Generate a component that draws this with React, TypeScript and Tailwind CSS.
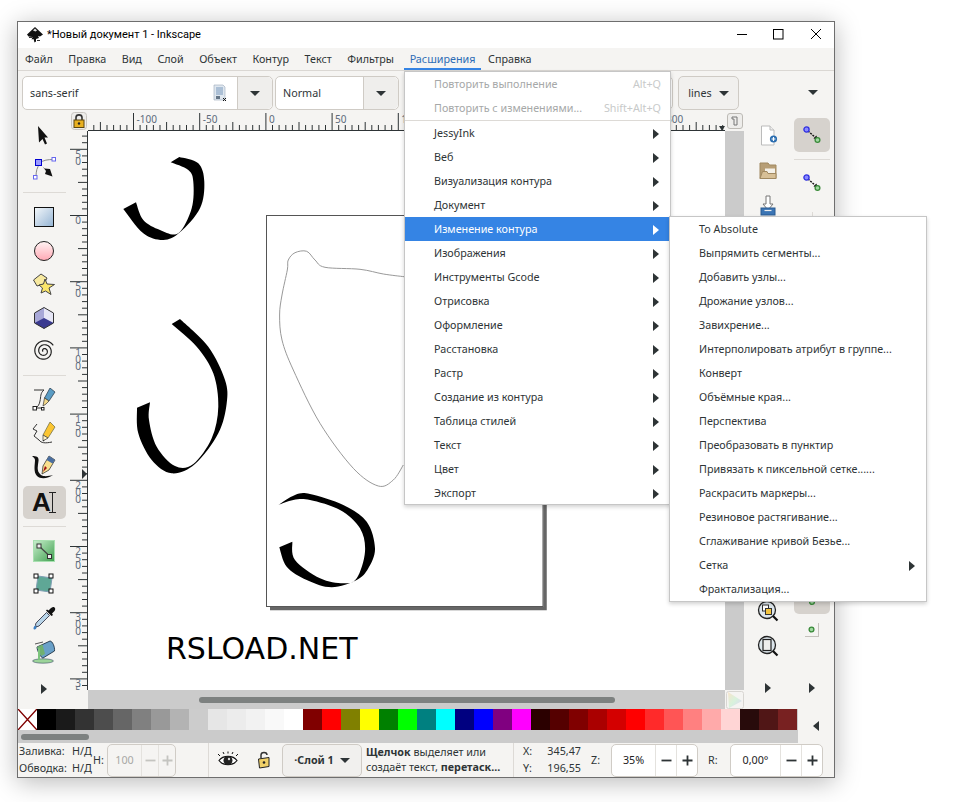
const menuBar = ['Файл', 'Правка', 'Вид', 'Слой', 'Объект', 'Контур', 'Текст', 'Фильтры']

const extMenu = [
  'JessyInk',
  'Веб',
  'Визуализация контура',
  'Документ',
  'Изменение контура',
  'Изображения',
  'Инструменты Gcode',
  'Отрисовка',
  'Оформление',
  'Расстановка',
  'Растр',
  'Создание из контура',
  'Таблица стилей',
  'Текст',
  'Цвет',
  'Экспорт',
]

const pathMenu = [
  'To Absolute',
  'Выпрямить сегменты...',
  'Добавить узлы...',
  'Дрожание узлов...',
  'Завихрение...',
  'Интерполировать атрибут в группе...',
  'Конверт',
  'Объёмные края...',
  'Перспектива',
  'Преобразовать в пунктир',
  'Привязать к пиксельной сетке......',
  'Раскрасить маркеры...',
  'Резиновое растягивание...',
  'Сглаживание кривой Безье...',
  'Сетка',
  'Фрактализация...',
]

const palette = [
  '#000000', '#1a1a1a', '#333333', '#4d4d4d', '#666666', '#808080', '#999999', '#b3b3b3', '#cccccc', '#e6e6e6',
  '#ececec', '#f2f2f2', '#f9f9f9', '#ffffff', '#800000', '#ff0000', '#808000', '#ffff00', '#008000', '#00ff00',
  '#008080', '#00ffff', '#000080', '#0000ff', '#800080', '#ff00ff', '#2b0000', '#550000', '#800000', '#aa0000',
  '#d40000', '#ff0000', '#ff2a2a', '#ff5555', '#ff8080', '#ffaaaa', '#ffd5d5', '#280b0b', '#501616', '#782121',
]

type Pt = [number, number]

// smooth curve through hand-picked points (catmull-rom as cubic beziers)
function spline(p: Pt[]) {
  let d = ''
  for (let i = 0; i < p.length - 1; i++) {
    const a = p[Math.max(i - 1, 0)]
    const b = p[i]
    const c = p[i + 1]
    const e = p[Math.min(i + 2, p.length - 1)]
    d += `C${b[0] + (c[0] - a[0]) / 6} ${b[1] + (c[1] - a[1]) / 6} ${c[0] - (e[0] - b[0]) / 6} ${c[1] - (e[1] - b[1]) / 6} ${c[0]} ${c[1]}`
  }
  return d
}

function stroke(outer: Pt[], inner: Pt[]) {
  return `M${outer[0][0]} ${outer[0][1]}${spline(outer)}L${inner[0][0]} ${inner[0][1]}${spline(inner)}Z`
}

const shapeA = stroke(
  [[179.3, 157], [198.3, 163.3], [204.3, 181.7], [200, 208.3], [180, 232.3], [163.3, 240], [143.3, 233.3], [123.3, 209]],
  [[136, 202.3], [143.3, 220], [160, 230], [178.3, 233.3], [191.7, 208.3], [193.3, 181.7], [188.3, 170], [170.7, 162.3]],
)

const shapeB = stroke(
  [[180, 319], [208.3, 346.7], [225, 380], [226.7, 403.3], [218.3, 433.3], [195, 464], [171.7, 473.3], [151.7, 460], [138.3, 433.3], [137, 407.7]],
  [[150, 402.3], [149, 420], [156.7, 446.7], [175, 466], [193.3, 464], [211.7, 438.3], [218.3, 406.7], [213.3, 373.3], [196.7, 346.7], [171.7, 324]],
)

const shapeC = stroke(
  [[278.3, 505], [295, 495], [310, 494], [343.3, 505], [366.7, 521.7], [375, 548.3], [368.3, 568.3], [356.7, 580], [331.7, 587.3], [306.7, 580], [286.7, 566.7], [279.3, 547.3]],
  [[292.3, 541.7], [295, 560], [320, 578.3], [343.3, 583.3], [356.7, 578.3], [365, 551.7], [360, 528.3], [340, 510], [310, 500], [293.3, 500], [278.3, 505]],
)

const outline: Pt[] = [
  [404, 276.7], [383.3, 274], [360, 269.3], [325, 267.3], [315, 260], [306.7, 251.3], [295, 252.7], [288.3, 260], [287.3, 270],
  [282, 295], [279.6, 315], [282, 340], [293.3, 370], [320, 423.3], [353.3, 468.3], [378.3, 486], [393.3, 480], [403.3, 465],
]

const spiral = (() => {
  const pts: string[] = []
  for (let i = 0; i <= 90; i++) {
    const t = (i / 90) * Math.PI * 5
    const r = 1 + (i / 90) * 9.8
    pts.push(`${(12 + r * Math.cos(t + 2.6)).toFixed(2)} ${(12 + r * Math.sin(t + 2.6)).toFixed(2)}`)
  }
  return `M${pts.join('L')}`
})()

function Tri({ dir = 'right', light = false }: { dir?: 'right' | 'left' | 'down'; light?: boolean }) {
  const fill = light ? '#ffffff' : '#2e3436'
  if (dir === 'down') {
    return (
      <svg width="10" height="5" viewBox="0 0 10 5">
        <path d="M0 0H10L5 5Z" fill={fill} />
      </svg>
    )
  }
  return (
    <svg width="6" height="10" viewBox="0 0 6 10">
      <path d={dir === 'right' ? 'M0 0L6 5L0 10Z' : 'M6 0L0 5L6 10Z'} fill={fill} />
    </svg>
  )
}

function Logo() {
  return (
    <svg width="18" height="18" viewBox="0 0 18 18">
      <path d="M9 1L17 8.5L14 10.5L12 10L13 12L10 13L10 15.5L8.5 16.5L7.5 13L5.5 13.5L6.5 11L2.5 10.5L1 8.5Z" fill="#111" />
      <path d="M7 4.5L9 2.5L11 4.5L9.5 5.5Z" fill="#ddd" />
      <path d="M3 11.5H6M11 14.5H14" stroke="#333" strokeWidth="1" />
    </svg>
  )
}

function I({ children }: { children: React.ReactNode }) {
  return (
    <svg width="24" height="24" viewBox="0 0 24 24">
      {children}
    </svg>
  )
}

const tools: (React.ReactNode | null)[] = [
  <I>
    <path d="M6 3L16 14.5L12.5 14.5L15 20.5L13 21.5L10.5 16L7 19.5Z" fill="#111" />
  </I>,
  <I>
    <path d="M4 21C4 15 5 11 8 8M8 7C11 4 16 3.5 22 3.5" fill="none" stroke="#888" />
    <rect x="3.5" y="3.5" width="6" height="6" fill="#9a9aff" stroke="#0000d0" />
    <rect x="20" y="1.5" width="3.5" height="3.5" fill="#fff" stroke="#6666ee" />
    <rect x="1.5" y="19.5" width="3.5" height="3.5" fill="#fff" stroke="#6666ee" />
    <path d="M10.5 10.5L12.5 12.5L18 13L20.5 20.5L13 18L14 15Z" fill="#111" />
  </I>,
  null,
  <I>
    <defs>
      <linearGradient id="rectG" x1="0" y1="0" x2="1" y2="1">
        <stop offset="0" stopColor="#f4f8fb" />
        <stop offset="1" stopColor="#94b4d4" />
      </linearGradient>
    </defs>
    <rect x="2.5" y="2.5" width="19" height="19" fill="url(#rectG)" stroke="#111" />
  </I>,
  <I>
    <defs>
      <linearGradient id="circG" x1="0" y1="0" x2="0" y2="1">
        <stop offset="0" stopColor="#fff4f4" />
        <stop offset="1" stopColor="#ffa8b4" />
      </linearGradient>
    </defs>
    <circle cx="12" cy="12" r="9.5" fill="url(#circG)" stroke="#222" />
  </I>,
  <I>
    <path d="M1.5 8L9 2L15 6L12 12L5 14Z" fill="#f7e9a0" stroke="#444" />
    <path d="M13 7L15 12L22.5 12.5L17 16L19 22.5L13.5 19L9 21L10.5 16L7 13L11.5 12Z" fill="#fbe66a" stroke="#444" />
  </I>,
  <I>
    <path d="M12 1.5L21.5 7V17L12 22.5L2.5 17V7Z" fill="#a8a8d8" />
    <path d="M12 1.5L21.5 7V17L12 12Z" fill="#e6e6f6" />
    <path d="M2.5 17L12 12L21.5 17L12 22.5Z" fill="#3a3a90" />
    <path d="M12 1.5L21.5 7V17L12 22.5L2.5 17V7Z" fill="none" stroke="#333" />
  </I>,
  <I>
    <path d={spiral} fill="none" stroke="#222" strokeWidth="1.2" />
  </I>,
  null,
  <I>
    <path d="M2 2H12C8 5 9 9 8 13C7.5 16 6 19 3.5 20H10" fill="none" stroke="#333" />
    <rect x="1" y="18.5" width="3.5" height="3.5" fill="#fff" stroke="#222" />
    <rect x="9.5" y="19.5" width="2.5" height="2.5" fill="#fff" stroke="#222" />
    <path d="M18 0L23 4L17 13L12.5 10Z" fill="#5a9cc4" stroke="#234" strokeWidth=".7" />
    <path d="M12.5 10L17 13L14 16L11 18Z" fill="#f4d98a" stroke="#333" strokeWidth=".7" />
  </I>,
  <I>
    <path d="M5 2L1 7L5 9L2 14L7 18C9 21 13 21.5 20 20" fill="none" stroke="#333" />
    <path d="M18 0L23 5L16 16L11 13Z" fill="#fbc531" stroke="#664" strokeWidth=".7" />
    <path d="M11 13L16 16L11 19Z" fill="#fff3c8" stroke="#333" strokeWidth=".7" />
    <path d="M11 18.5L13 17.5L11 19.5Z" fill="#111" />
  </I>,
  <I>
    <path d="M0 1C5 1 7 2 6.5 6C6 11 4 16 9 20C12 22 17 21 21 20C17 23 9 25 5 21C1 17 3 9 3 5C3 3 1 2 0 1Z" fill="#111" />
    <path d="M17 1L23 5L17 15L10 19L11 11Z" fill="#f9e08e" stroke="#222" strokeWidth=".7" />
    <path d="M17 1L23 5L20.5 8.5L14.5 5Z" fill="#4a6ea0" />
    <path d="M13 11L15 13L11 17Z" fill="#a01010" />
  </I>,
  'text',
  null,
  <I>
    <defs>
      <linearGradient id="gradG" x1="0" y1="0" x2="1" y2="1">
        <stop offset="0" stopColor="#c8eecc" />
        <stop offset="1" stopColor="#40a050" />
      </linearGradient>
    </defs>
    <rect x="1.5" y="1.5" width="21" height="21" fill="url(#gradG)" stroke="#a8e0b0" />
    <path d="M7 7L17.5 17" stroke="#444" strokeWidth="1.2" />
    <rect x="5" y="5" width="4" height="4" fill="#eee" stroke="#333" />
    <rect x="15.5" y="15.5" width="4" height="4" fill="#eee" stroke="#333" />
  </I>,
  <I>
    <path d="M6 4L20 6L18 20L4 18Z" fill="#5fa796" stroke="#7f9fb4" />
    <rect x="2" y="2" width="4" height="4" fill="#fff" stroke="#111" />
    <rect x="17" y="2" width="4" height="4" fill="#fff" stroke="#111" />
    <rect x="2" y="17" width="4" height="4" fill="#fff" stroke="#111" />
    <rect x="17" y="17" width="4" height="4" fill="#fff" stroke="#111" />
  </I>,
  <I>
    <path d="M21 1C23 1 24 3 22.5 5L20 7.5L21 9L19.5 10L14 4.5L15 3.5L16.5 4.5L19 2Z" fill="#111" />
    <path d="M14.5 6.5L17.5 9.5L7 20L4 21L3.5 18L5 16Z" fill="#b8d4e8" stroke="#223" strokeWidth=".8" />
    <path d="M3 19.5C1.5 21 1 22.5 2 23.5C3.5 24 4.5 22.5 4.5 21Z" fill="#3b7fc4" />
  </I>,
  <I>
    <ellipse cx="11" cy="21" rx="10.5" ry="2.2" fill="#9cd49a" stroke="#235" strokeWidth=".5" />
    <path d="M5 7L18 1C20.5 1 23 7 22.5 11L11 18C9 18 5 11 5 7Z" fill="#6aa0c8" stroke="#123" strokeWidth=".8" />
    <path d="M5 7L10.5 4.5L13 14L9 16Z" fill="#70b070" />
    <path d="M3 4L11 2" stroke="#555" />
    <path d="M7 8V20" stroke="#7cc47c" strokeWidth="2" />
  </I>,
]

function NewDoc() {
  return (
    <I>
      <path d="M5.5 2H14L18 6V21H5.5Z" fill="#fff" stroke="#bbb" />
      <path d="M14 2V6H18" fill="#eee" stroke="#bbb" />
      <circle cx="17.5" cy="15" r="3.6" fill="#2a6db0" />
      <path d="M15.5 15H19.5M17.5 13V17" stroke="#fff" strokeWidth="1.2" />
    </I>
  )
}

function OpenDoc() {
  return (
    <I>
      <path d="M4 4H12L13.5 6H20V19.5H4Z" fill="#b79e76" stroke="#a08860" />
      <path d="M9 9.5H19V14H9Z" fill="#f4f0e8" />
      <path d="M4 19.5L6.5 12.5H11L12 14.5H20V19.5Z" fill="#d7bf96" stroke="#a08860" />
    </I>
  )
}

function ImportDoc() {
  return (
    <I>
      <path d="M10 2H14V10H17L12 16L7 10H10Z" fill="#fff" stroke="#777" />
      <rect x="5" y="14" width="14" height="7" fill="#3b75b5" stroke="#2a5a90" />
      <path d="M8.5 16.5H15.5" stroke="#eee" strokeWidth="1.2" />
    </I>
  )
}

function SnapNodes() {
  return (
    <I>
      <path d="M8 8L16 15" stroke="#111" strokeWidth="1.4" strokeDasharray="2 1" />
      <path d="M17.5 16.5L16.5 12.5L13.5 15.5Z" fill="#111" />
      <circle cx="6.5" cy="6.5" r="2.6" fill="#8a8aff" stroke="#3030e0" strokeWidth="1.3" />
      <circle cx="17.5" cy="17" r="2.4" fill="#a0d8a0" stroke="#3a8a3a" strokeWidth="1.3" />
    </I>
  )
}

function ZoomIcon({ kind }: { kind: 'selection' | 'page' }) {
  return (
    <I>
      <circle cx="11" cy="11" r="8.5" fill="#dde6ec" stroke="#222" strokeWidth="1.3" />
      <path d="M17 17L21.5 21.5" stroke="#111" strokeWidth="2.2" />
      {kind === 'selection' ? (
        <>
          <rect x="6.5" y="6" width="6" height="6" fill="#fff" stroke="#333" />
          <rect x="9.5" y="9.5" width="6" height="6" fill="#f4c542" stroke="#333" />
        </>
      ) : (
        <rect x="7" y="5.5" width="8" height="11" fill="#eee" stroke="#222" strokeWidth="1.2" />
      )}
    </I>
  )
}

function HRuler() {
  const ticks = Array.from({ length: 100 }, (_, i) => i)
  const labels = ['-100', '-50', '0', '50', '100', '150', '200', '250', '300']
  return (
    <svg width="637" height="20" viewBox="0 0 637 20" className="block">
      {ticks.map(i => {
        const x = 45.5 + (i - 6) * 6.62
        const k = (i + 4) % 10
        const top = k === 0 ? 2 : k === 5 ? 11 : 14
        return <path key={i} d={`M${x.toFixed(1)} ${top}V19`} stroke="#2e3436" />
      })}
      {labels.map((t, i) => (
        <text key={t} x={45.5 + i * 66.2 + 3} y="12" fontSize="10" fill="#5d6b7c">
          {t}
        </text>
      ))}
      <path d="M0 19.5H637" stroke="#2e3436" />
      <path d="M631 15L637 15L634 20Z" fill="#2e3436" />
    </svg>
  )
}

function VRuler() {
  const ticks = Array.from({ length: 85 }, (_, i) => i)
  const labels = ['50', '0', '50', '100', '150', '200', '250', '300', '350']
  return (
    <svg width="18" height="559" viewBox="0 0 18 559" className="block shrink-0">
      {ticks.map(i => {
        const y = 84.5 + (i - 12) * 6.62
        const k = (i + 8) % 10
        const left = k === 0 ? 0 : k === 5 ? 8 : 12
        return <path key={i} d={`M${left} ${y.toFixed(1)}H17`} stroke="#2e3436" />
      })}
      {labels.map((t, n) =>
        t.split('').map((c, i) => (
          <text key={`${n}-${i}`} x="8" y={84 + (n - 1) * 66.2 + 9 + i * 7} fontSize="10" textAnchor="middle" fill="#5d6b7c">
            {c}
          </text>
        )),
      )}
      <path d="M17.5 0V559" stroke="#2e3436" />
      <path d="M12 338L17 343L12 348Z" fill="#2e3436" />
    </svg>
  )
}

function Drawing() {
  return (
    <svg viewBox="88 131 637 559" className="absolute inset-0 w-full h-full">
      <path d={shapeA} fill="#000" />
      <path d={shapeB} fill="#000" />
      <path d={shapeC} fill="#000" />
      <rect x="266.5" y="215.5" width="276.5" height="391" fill="none" stroke="#555" />
      <path d="M545 219V608.5H270" fill="none" stroke="#666" strokeWidth="3.5" />
      <path d={`M${outline[0][0]} ${outline[0][1]}${spline(outline)}`} fill="none" stroke="#999" />
    </svg>
  )
}

function Spin({ value, w, btn, dim = false }: { value: string; w: string; btn: string; dim?: boolean }) {
  const sign = dim ? 'text-[#c4c4c0]' : 'text-[#2e3436]'
  return (
    <div className={`flex h-[33px] items-stretch rounded-[5px] border border-[#d0ccc6] shrink-0 ${dim ? 'bg-[#f5f4f2]' : 'bg-white'}`}>
      <div className={`flex items-center justify-center ${w} ${dim ? 'text-[#a8a8a4]' : 'text-[#222]'}`}>{value}</div>
      <div className={`flex items-center justify-center border-l border-[#e4e2de] ${btn} ${sign}`}>
        <svg width="11" height="11" viewBox="0 0 11 11">
          <path d="M0.5 5.5H10.5" stroke="currentColor" strokeWidth="1.8" />
        </svg>
      </div>
      <div className={`flex items-center justify-center border-l border-[#e4e2de] ${btn} ${sign}`}>
        <svg width="11" height="11" viewBox="0 0 11 11">
          <path d="M0.5 5.5H10.5M5.5 0.5V10.5" stroke="currentColor" strokeWidth="1.8" />
        </svg>
      </div>
    </div>
  )
}

export default function App() {
  return (
    <div className="w-[964px] h-[802px] bg-white pt-[21px] pl-[17px] overflow-hidden text-[10.75px] text-[#2e3436] [font-family:'Noto_Sans','Liberation_Sans',sans-serif]">
      <div className="relative flex flex-col w-[818px] h-[757px] border border-[#6e6e6e] bg-[#f5f4f2] shadow-[0_4px_24px_rgba(0,0,0,0.28)]">
        {/* title bar */}
        <div className="flex items-center h-[26px] bg-white shrink-0 text-black">
          <div className="ml-[8px] mr-[3px]">
            <Logo />
          </div>
          <span className="text-[11px] [font-family:'Roboto',sans-serif]">*Новый документ 1 - Inkscape</span>
          <div className="ml-auto flex items-center">
            <svg width="140" height="26" viewBox="0 0 140 26">
              <path d="M43 12.5H53" stroke="#000" />
              <rect x="79.5" y="7.5" width="9.5" height="9.5" fill="none" stroke="#000" />
              <path d="M117 7L127 17M127 7L117 17" stroke="#000" />
            </svg>
          </div>
        </div>

        {/* menu bar */}
        <div className="flex items-stretch h-[23px] border-b border-[#dad7d3] shrink-0">
          <div className="flex items-center w-[379px] ml-[7px] gap-[15.5px] pt-[1px]">
            {menuBar.map(m => (
              <span key={m}>{m}</span>
            ))}
          </div>
          <div className="flex items-center w-[77px] justify-center border-b-[2px] border-[#3584e4] pt-[3px] text-[#2d6cb5]">
            Расширения
          </div>
          <span className="ml-[7px] flex items-center pt-[1px]">Справка</span>
        </div>

        {/* tool controls */}
        <div className="flex items-start h-[40px] pt-[5px] pl-[4px] shrink-0">
          <div className="flex w-[251px] h-[34px] rounded-[5px] border border-[#cfcbc5] bg-white">
            <div className="flex flex-1 items-center pl-[7px] pr-[10px]">
              <span>sans-serif</span>
              <svg className="ml-auto" width="14" height="18" viewBox="0 0 14 18">
                <path d="M1 1H10L12 3V16H1Z" fill="#dfe7ef" stroke="#9aa8b8" strokeWidth=".6" />
                <path d="M3 4H10M3 6H10M3 8H10M3 10H10" stroke="#7898bc" />
                <rect x="3" y="12" width="4" height="3" fill="#678" />
                <path d="M10 14L13 17M13 14L10 17" stroke="#111" />
              </svg>
            </div>
            <div className="flex w-[35px] items-center justify-center rounded-r-[5px] border-l border-[#cfcbc5] bg-[#efeeec]">
              <Tri dir="down" />
            </div>
          </div>
          <div className="ml-[2px] flex w-[124px] h-[34px] rounded-[5px] border border-[#cfcbc5] bg-white">
            <div className="flex flex-1 items-center pl-[7px]">Normal</div>
            <div className="flex w-[35px] items-center justify-center rounded-r-[5px] border-l border-[#cfcbc5] bg-[#efeeec]">
              <Tri dir="down" />
            </div>
          </div>
          <div className="ml-[8px] w-[266px] h-[34px] rounded-[5px] border border-[#cfcbc5] bg-white" />
          <div className="ml-[5px] flex w-[61px] h-[34px] items-center justify-center gap-[7px] rounded-[5px] border border-[#cfcbc5] bg-[#f1f0ee]">
            lines
            <Tri dir="down" />
          </div>
          <div className="ml-[69px] mt-[14px]">
            <Tri dir="down" />
          </div>
        </div>

        {/* main */}
        <div className="flex h-[598px] shrink-0">
          <div className="flex flex-col items-center w-[52px] shrink-0 pt-[7px]">
            {tools.map((t, i) =>
              t === null ? (
                <div key={i} className="w-[43px] h-px bg-[#dddad6] my-[7px] shrink-0" />
              ) : t === 'text' ? (
                <div key={i} className="flex items-center justify-center w-[43px] h-[33px] mt-[2px] rounded-[5px] bg-[#d6d2cd] shrink-0 relative">
                  <span className="mr-[5px] text-[26px] leading-none font-bold text-[#111] [font-family:'Liberation_Sans',sans-serif]">A</span>
                  <svg className="absolute right-[10px] top-[6px]" width="7" height="21" viewBox="0 0 7 21">
                    <path d="M0 .5H7M3.5 0V21M0 20.5H7" stroke="#222" />
                  </svg>
                </div>
              ) : (
                <div key={i} className="flex items-center justify-center h-[33.6px] shrink-0">
                  {t}
                </div>
              ),
            )}
            <div className="mt-[16px]">
              <Tri />
            </div>
          </div>

          <div className="flex flex-col w-[674px] shrink-0">
            <div className="flex h-[20px] shrink-0">
              <div className="w-[18px] flex items-center justify-center">
                <svg width="16" height="18" viewBox="0 0 16 18">
                  <rect x=".5" y=".5" width="15" height="17" rx="3" fill="#eeedeb" stroke="#c8c5c0" />
                  <path d="M5 8V5.5C5 2 11 2 11 5.5V8" fill="none" stroke="#333" strokeWidth="1.6" />
                  <rect x="3" y="8" width="10" height="7.5" fill="#e8b020" stroke="#5a4510" />
                  <circle cx="8" cy="11.5" r="1.2" fill="#222" />
                </svg>
              </div>
              <div className="w-[637px] overflow-hidden">
                <HRuler />
              </div>
              <div className="w-[19px] flex items-center justify-center">
                <svg width="16" height="16" viewBox="0 0 16 16">
                  <rect x=".5" y=".5" width="15" height="15" rx="2.5" fill="#eeedeb" stroke="#bdbab5" />
                  <path d="M5 4H10V12H7V6H5Z" fill="none" stroke="#777" />
                </svg>
              </div>
            </div>
            <div className="flex h-[559px] shrink-0">
              <VRuler />
              <div className="relative w-[637px] bg-white overflow-hidden">
                <Drawing />
                <div className="absolute left-[78px] top-[500px] text-[30px] leading-[36px] text-black [font-family:'DejaVu_Sans',sans-serif]">
                  RSLOAD.NET
                </div>
              </div>
              <div className="w-[19px] bg-[#cbcbcb]" />
            </div>
            <div className="flex h-[19px] shrink-0">
              <div className="w-[18px]" />
              <div className="w-[637px] flex items-center pl-[111px] bg-[#cbcbcb]">
                <div className="w-[416px] h-[6px] rounded-full bg-[#7d8180]" />
              </div>
              <div className="w-[19px] flex items-center justify-center">
                <svg width="18" height="18" viewBox="0 0 18 18">
                  <defs>
                    <linearGradient id="cornerG" x1="0" y1="0" x2="1" y2="1">
                      <stop offset="0" stopColor="#f8e4cc" />
                      <stop offset=".5" stopColor="#d8f2dc" />
                      <stop offset="1" stopColor="#dcd4f6" />
                    </linearGradient>
                  </defs>
                  <rect x=".5" y=".5" width="17" height="17" rx="2" fill="#f5f4f2" stroke="#d8d6d2" />
                  <path d="M2 1L16 10L3 17Z" fill="url(#cornerG)" />
                </svg>
              </div>
            </div>
          </div>

          <div className="flex flex-col items-center w-[46px] shrink-0 pt-[7px] pl-[2px]">
            <div className="h-[35px] flex items-center"><NewDoc /></div>
            <div className="h-[35px] flex items-center"><OpenDoc /></div>
            <div className="h-[35px] flex items-center"><ImportDoc /></div>
            <div className="mt-[370px] h-[35px] flex items-center"><ZoomIcon kind="selection" /></div>
            <div className="h-[35px] flex items-center"><ZoomIcon kind="page" /></div>
            <div className="mt-[20px]"><Tri /></div>
          </div>

          <div className="flex flex-col items-center w-[44px] shrink-0 pt-[7px]">
            <div className="flex items-center justify-center w-[36px] h-[34px] rounded-[5px] bg-[#d6d2cd] shrink-0">
              <SnapNodes />
            </div>
            <div className="w-[36px] h-px bg-[#dddad6] mt-[7px] shrink-0" />
            <div className="mt-[11px] h-[24px] shrink-0"><SnapNodes /></div>
            <div className="mt-[17px] h-[8px] w-px bg-[#dddad6] shrink-0" />
            <div className="mt-[370px] flex items-center justify-center w-[36px] h-[24px] rounded-[5px] bg-[#d6d2cd] shrink-0">
              <svg width="8" height="8" viewBox="0 0 8 8">
                <circle cx="4" cy="4" r="2.4" fill="#a0d8a0" stroke="#3a8a3a" strokeWidth="1.3" />
              </svg>
            </div>
            <div className="mt-[9px] flex items-center justify-center w-[14px] h-[14px] border-r border-b border-[#c4c1bc] shrink-0">
              <svg width="7" height="7" viewBox="0 0 7 7">
                <circle cx="3.5" cy="3.5" r="2.4" fill="#a0d8a0" stroke="#3a8a3a" strokeWidth="1.3" />
              </svg>
            </div>
            <div className="mt-[46px]"><Tri /></div>
          </div>
        </div>

        {/* palette */}
        <div className="flex h-[34px] shrink-0">
          <div className="w-[780px] shrink-0 bg-[#cbcbcb]">
            <div className="flex h-[21px]">
              <svg width="19" height="21" viewBox="0 0 19 21" className="shrink-0 bg-white">
                <path d="M0 0L19 21M19 0L0 21" stroke="#800000" strokeWidth="1.4" />
              </svg>
              {palette.map((c, i) => (
                <div key={i} className="w-[19px] h-[21px] shrink-0" style={{ backgroundColor: c }} />
              ))}
            </div>
            <div className="flex items-center h-[13px] pl-[3px]">
              <div className="w-[68px] h-[6px] rounded-full bg-[#7d8180]" />
            </div>
          </div>
          <div className="flex flex-1 items-center justify-center pr-[1px]">
            <Tri dir="left" />
          </div>
        </div>

        {/* status bar */}
        <div className="flex items-center flex-1 min-h-0">
          <div className="w-[75px] pl-[1px] shrink-0 leading-[17px] whitespace-nowrap">
            <div className="flex"><span className="w-[53px]">Заливка:</span>Н/Д</div>
            <div className="flex"><span className="w-[53px]">Обводка:</span>Н/Д</div>
          </div>
          <span className="w-[14px] shrink-0">H:</span>
          <Spin value="100" w="w-[33px]" btn="w-[17px]" dim />
          <div className="ml-[32px] w-px self-stretch bg-[#dddad6]" />
          <div className="ml-[7px] w-[24px]">
            <svg width="24" height="18" viewBox="0 0 24 18">
              <path d="M3 9.5C7 4 17 4 21 9.5C17 15 7 15 3 9.5Z" fill="#fff" stroke="#111" strokeWidth="1.2" />
              <circle cx="12" cy="9.5" r="4.5" fill="#222" />
              <circle cx="13" cy="8" r="1.2" fill="#ddd" />
              <path d="M4 5L2 3M8 3L7 1M12 2.5V.5M16 3L17 1M20 5L22 3" stroke="#111" />
            </svg>
          </div>
          <div className="ml-[12px] w-[24px]">
            <svg width="24" height="20" viewBox="0 0 24 20">
              <path d="M9 8V5C9 1.5 15 1.5 15 5" fill="none" stroke="#333" strokeWidth="1.5" />
              <path d="M6.5 9L17 7.5V16.5L7.5 18Z" fill="#f0d068" stroke="#222" />
              <circle cx="12" cy="12.5" r="1.3" fill="#222" />
            </svg>
          </div>
          <div className="ml-[6px] flex w-[80px] h-[33px] items-center justify-center gap-[6px] rounded-[5px] border border-[#cfcbc5] bg-[#f1f0ee] font-bold shrink-0">
            ·Слой 1
            <Tri dir="down" />
          </div>
          <div className="ml-[4px] w-[147px] shrink-0 leading-[15px] whitespace-nowrap">
            <div><b>Щелчок</b> выделяет или</div>
            <div>создаёт текст, <b>перетаск...</b></div>
          </div>
          <div className="w-px self-stretch bg-[#dddad6]" />
          <div className="ml-[9px] w-[58px] shrink-0 leading-[17px]">
            <div className="flex justify-between"><span>X:</span><span>345,47</span></div>
            <div className="flex justify-between"><span>Y:</span><span>196,55</span></div>
          </div>
          <span className="ml-[10px] w-[20px] shrink-0">Z:</span>
          <Spin value="35%" w="w-[43px]" btn="w-[21px]" />
          <span className="ml-[10px] w-[22px] shrink-0">R:</span>
          <Spin value="0,00°" w="w-[49px]" btn="w-[21px]" />
        </div>

        {/* open menus */}
        <div className="absolute left-[386px] top-[49px] w-[267px] h-[434px] border border-[#c6c6c6] bg-white shadow-[0_2px_4px_rgba(0,0,0,0.18)] whitespace-nowrap">
          <div className="flex items-center justify-between h-[24px] pl-[29px] pr-[9px] text-[#a6a8a8]">
            <span>Повторить выполнение</span>
            <span className="text-[#c8caca]">Alt+Q</span>
          </div>
          <div className="flex items-center justify-between h-[24px] pl-[29px] pr-[9px] text-[#a6a8a8]">
            <span>Повторить с изменениями...</span>
            <span className="text-[#c8caca]">Shift+Alt+Q</span>
          </div>
          <div className="h-px bg-[#dddad6]" />
          {extMenu.map(m => {
            const on = m === 'Изменение контура'
            return (
              <div key={m} className={`flex items-center justify-between h-[24px] pl-[29px] pr-[11px] pt-[1px] ${on ? 'bg-[#3584e4] text-white' : ''}`}>
                <span>{m}</span>
                <Tri light={on} />
              </div>
            )
          })}
        </div>
        <div className="absolute left-[651px] top-[194px] w-[258px] h-[386px] border border-[#c6c6c6] bg-white shadow-[0_2px_4px_rgba(0,0,0,0.18)] whitespace-nowrap">
          {pathMenu.map(m => (
            <div key={m} className="flex items-center justify-between h-[24px] pl-[29px] pr-[11px] pt-[1px]">
              <span>{m}</span>
              {m === 'Сетка' && <Tri />}
            </div>
          ))}
        </div>
      </div>
    </div>
  )
}
